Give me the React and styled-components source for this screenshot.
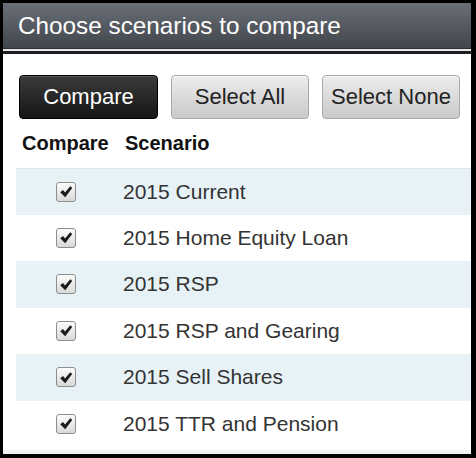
import React, { useState } from "react";
import styled, { createGlobalStyle } from "styled-components";

const GlobalStyle = createGlobalStyle`
	html, body {
		margin: 0;
		padding: 0;
		background: #ffffff;
	}
	* {
		box-sizing: border-box;
	}
`;

const Frame = styled.div`
	width: 476px;
	height: 458px;
	border-style: solid;
	border-color: #000;
	border-width: 3px 5px 4px 3px;
	background: #fff;
	font-family: "Liberation Sans", Arial, sans-serif;
	display: flex;
	flex-direction: column;
	overflow: hidden;
`;

const TitleBar = styled.div`
	height: 46px;
	flex-shrink: 0;
	padding-left: 15px;
	display: flex;
	align-items: center;
	background: linear-gradient(#6a6f77, #41454c);
	color: #fff;
	font-size: 24.3px;
	border-bottom: 1px solid #2c2f33;
`;

const TitleRule = styled.div`
	height: 5px;
	flex-shrink: 0;
	border-top: 2px solid #e6e6e6;
	background: #1e1f22;
`;

const Toolbar = styled.div`
	display: flex;
	padding: 21px 0 0 16px;
	gap: 13px;
`;

const Button = styled.button`
	height: 44px;
	width: ${(p) => p.$w}px;
	border-radius: 4px;
	font-family: "Liberation Sans", Arial, sans-serif;
	font-size: 22px;
	padding: 0;
	cursor: pointer;
	border: 1px solid ${(p) => (p.$dark ? "#000" : "#a9a9a9")};
	color: ${(p) => (p.$dark ? "#fff" : "#222")};
	background: ${(p) =>
		p.$dark
			? "linear-gradient(#3a3a3a, #161616)"
			: "linear-gradient(#ececec, #c9c9c9)"};
	box-shadow: inset 0 1px 0 ${(p) => (p.$dark ? "#555" : "#f8f8f8")};
`;

const Table = styled.div`
	margin-left: 13px;
	display: flex;
	flex-direction: column;
`;

const HeadRow = styled.div`
	height: 49px;
	display: flex;
	align-items: center;
	font-weight: bold;
	font-size: 20px;
	color: #111;
`;

const HeadCell = styled.div`
	width: ${(p) => (p.$w ? p.$w + "px" : "auto")};
	padding-left: ${(p) => p.$pad}px;
`;

const Row = styled.label`
	height: 46.5px;
	display: flex;
	align-items: center;
	background: ${(p) => (p.$shade ? "#e7f2f7" : "#fff")};
	border-top: ${(p) => (p.$first ? "1px solid #dfe6e9" : "none")};
	cursor: pointer;
`;

const CheckCell = styled.div`
	width: 100px;
	display: flex;
	justify-content: center;
`;

const CheckBox = styled.span`
	width: 20px;
	height: 20px;
	border: 1px solid #8d8d8d;
	border-radius: 3px;
	background: linear-gradient(#fdfdfd, #d8d8d8);
	display: flex;
	align-items: center;
	justify-content: center;
`;

const Name = styled.div`
	padding-left: 7px;
	font-size: 21px;
	color: #333;
`;

const Footer = styled.div`
	flex: 1;
	display: flex;
	flex-direction: column;
	justify-content: flex-end;
`;

const FooterLine = styled.div`
	height: 4px;
	background: #f2f2f2;
`;

const scenarios = [
	"2015 Current",
	"2015 Home Equity Loan",
	"2015 RSP",
	"2015 RSP and Gearing",
	"2015 Sell Shares",
	"2015 TTR and Pension",
];

function Check({ on }) {
	return (
		<CheckBox>
			{on && (
				<svg width="14" height="13" viewBox="0 0 14 13">
					<path
						d="M1.2 7.2 L4 4.9 L6 7.6 L11.3 1.2 L13.2 2.9 L6.2 12.2 Z"
						fill="#1a1a1a"
					/>
				</svg>
			)}
		</CheckBox>
	);
}

export default function App() {
	const [checked, setChecked] = useState(scenarios.map(() => true));

	const toggle = (i) => {
		setChecked(checked.map((c, j) => (j === i ? !c : c)));
	};

	return (
		<Frame>
			<GlobalStyle />
			<TitleBar>Choose scenarios to compare</TitleBar>
			<TitleRule />
			<Toolbar>
				<Button $dark $w={139}>
					Compare
				</Button>
				<Button $w={138} onClick={() => setChecked(scenarios.map(() => true))}>
					Select All
				</Button>
				<Button $w={138} onClick={() => setChecked(scenarios.map(() => false))}>
					Select None
				</Button>
			</Toolbar>
			<Table>
				<HeadRow>
					<HeadCell $w={100} $pad={6}>
						Compare
					</HeadCell>
					<HeadCell $pad={9}>Scenario</HeadCell>
				</HeadRow>
				{scenarios.map((s, i) => (
					<Row
						key={s}
						$shade={i % 2 === 0}
						$first={i === 0}
						onClick={() => toggle(i)}
					>
						<CheckCell>
							<Check on={checked[i]} />
						</CheckCell>
						<Name>{s}</Name>
					</Row>
				))}
			</Table>
			<Footer>
				<FooterLine />
			</Footer>
		</Frame>
	);
}
